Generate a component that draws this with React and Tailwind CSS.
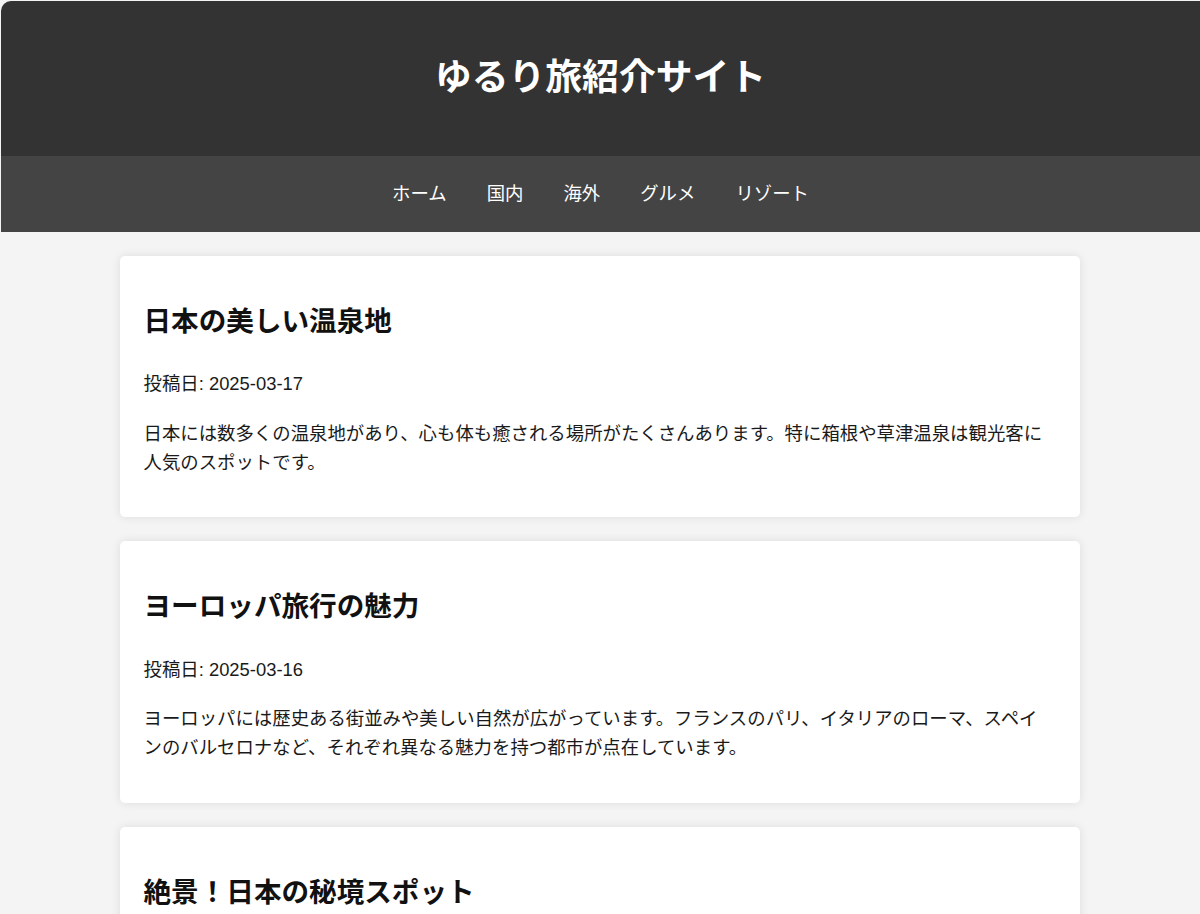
export default function App() {
  const posts = [
    {
      title: "日本の美しい温泉地",
      date: "2025-03-17",
      body: "日本には数多くの温泉地があり、心も体も癒される場所がたくさんあります。特に箱根や草津温泉は観光客に人気のスポットです。",
    },
    {
      title: "ヨーロッパ旅行の魅力",
      date: "2025-03-16",
      body: "ヨーロッパには歴史ある街並みや美しい自然が広がっています。フランスのパリ、イタリアのローマ、スペインのバルセロナなど、それぞれ異なる魅力を持つ都市が点在しています。",
    },
    {
      title: "絶景！日本の秘境スポット",
      date: "2025-03-15",
      body: "日本には知られざる秘境がたくさんあります。四国の祖谷渓や岐阜の白川郷など、自然と伝統が息づく場所を訪れてみませんか。",
    },
  ];
  const font = { fontFamily: '"Liberation Sans", "Noto Sans CJK JP", sans-serif' };
  return (
    <div
      className="min-h-[914px] bg-[#f4f4f4] text-[18.4px] leading-[1.6] text-[#1a1a1a] pt-px pl-px"
      style={font}
    >
      <header className="h-[155px] bg-[#333] rounded-tl-[10px] flex items-center justify-center">
        <h1 className="text-[36.8px] font-bold text-white leading-[1.6]">ゆるり旅紹介サイト</h1>
      </header>
      <nav className="h-[76px] bg-[#444] flex items-center justify-center">
        {["ホーム", "国内", "海外", "グルメ", "リゾート"].map((n) => (
          <a key={n} className="text-white mx-[20px]" href="#">
            {n}
          </a>
        ))}
      </nav>
      <main className="w-[960px] mx-auto pt-[24px] pb-[24px] flex flex-col gap-[24px] -translate-x-px">
        {posts.map((p) => (
          <article
            key={p.title}
            className="bg-white rounded-[5px] shadow-[0_0_10px_rgba(0,0,0,0.1)] px-[24px] pt-[21px] pb-[40px]"
          >
            <h2 className="text-[27.6px] font-bold text-[#111] leading-[1.6] mt-[23px] mb-[25px]">
              {p.title}
            </h2>
            <p className="mb-[20px]">投稿日: {p.date}</p>
            <p>{p.body}</p>
          </article>
        ))}
      </main>
    </div>
  );
}
